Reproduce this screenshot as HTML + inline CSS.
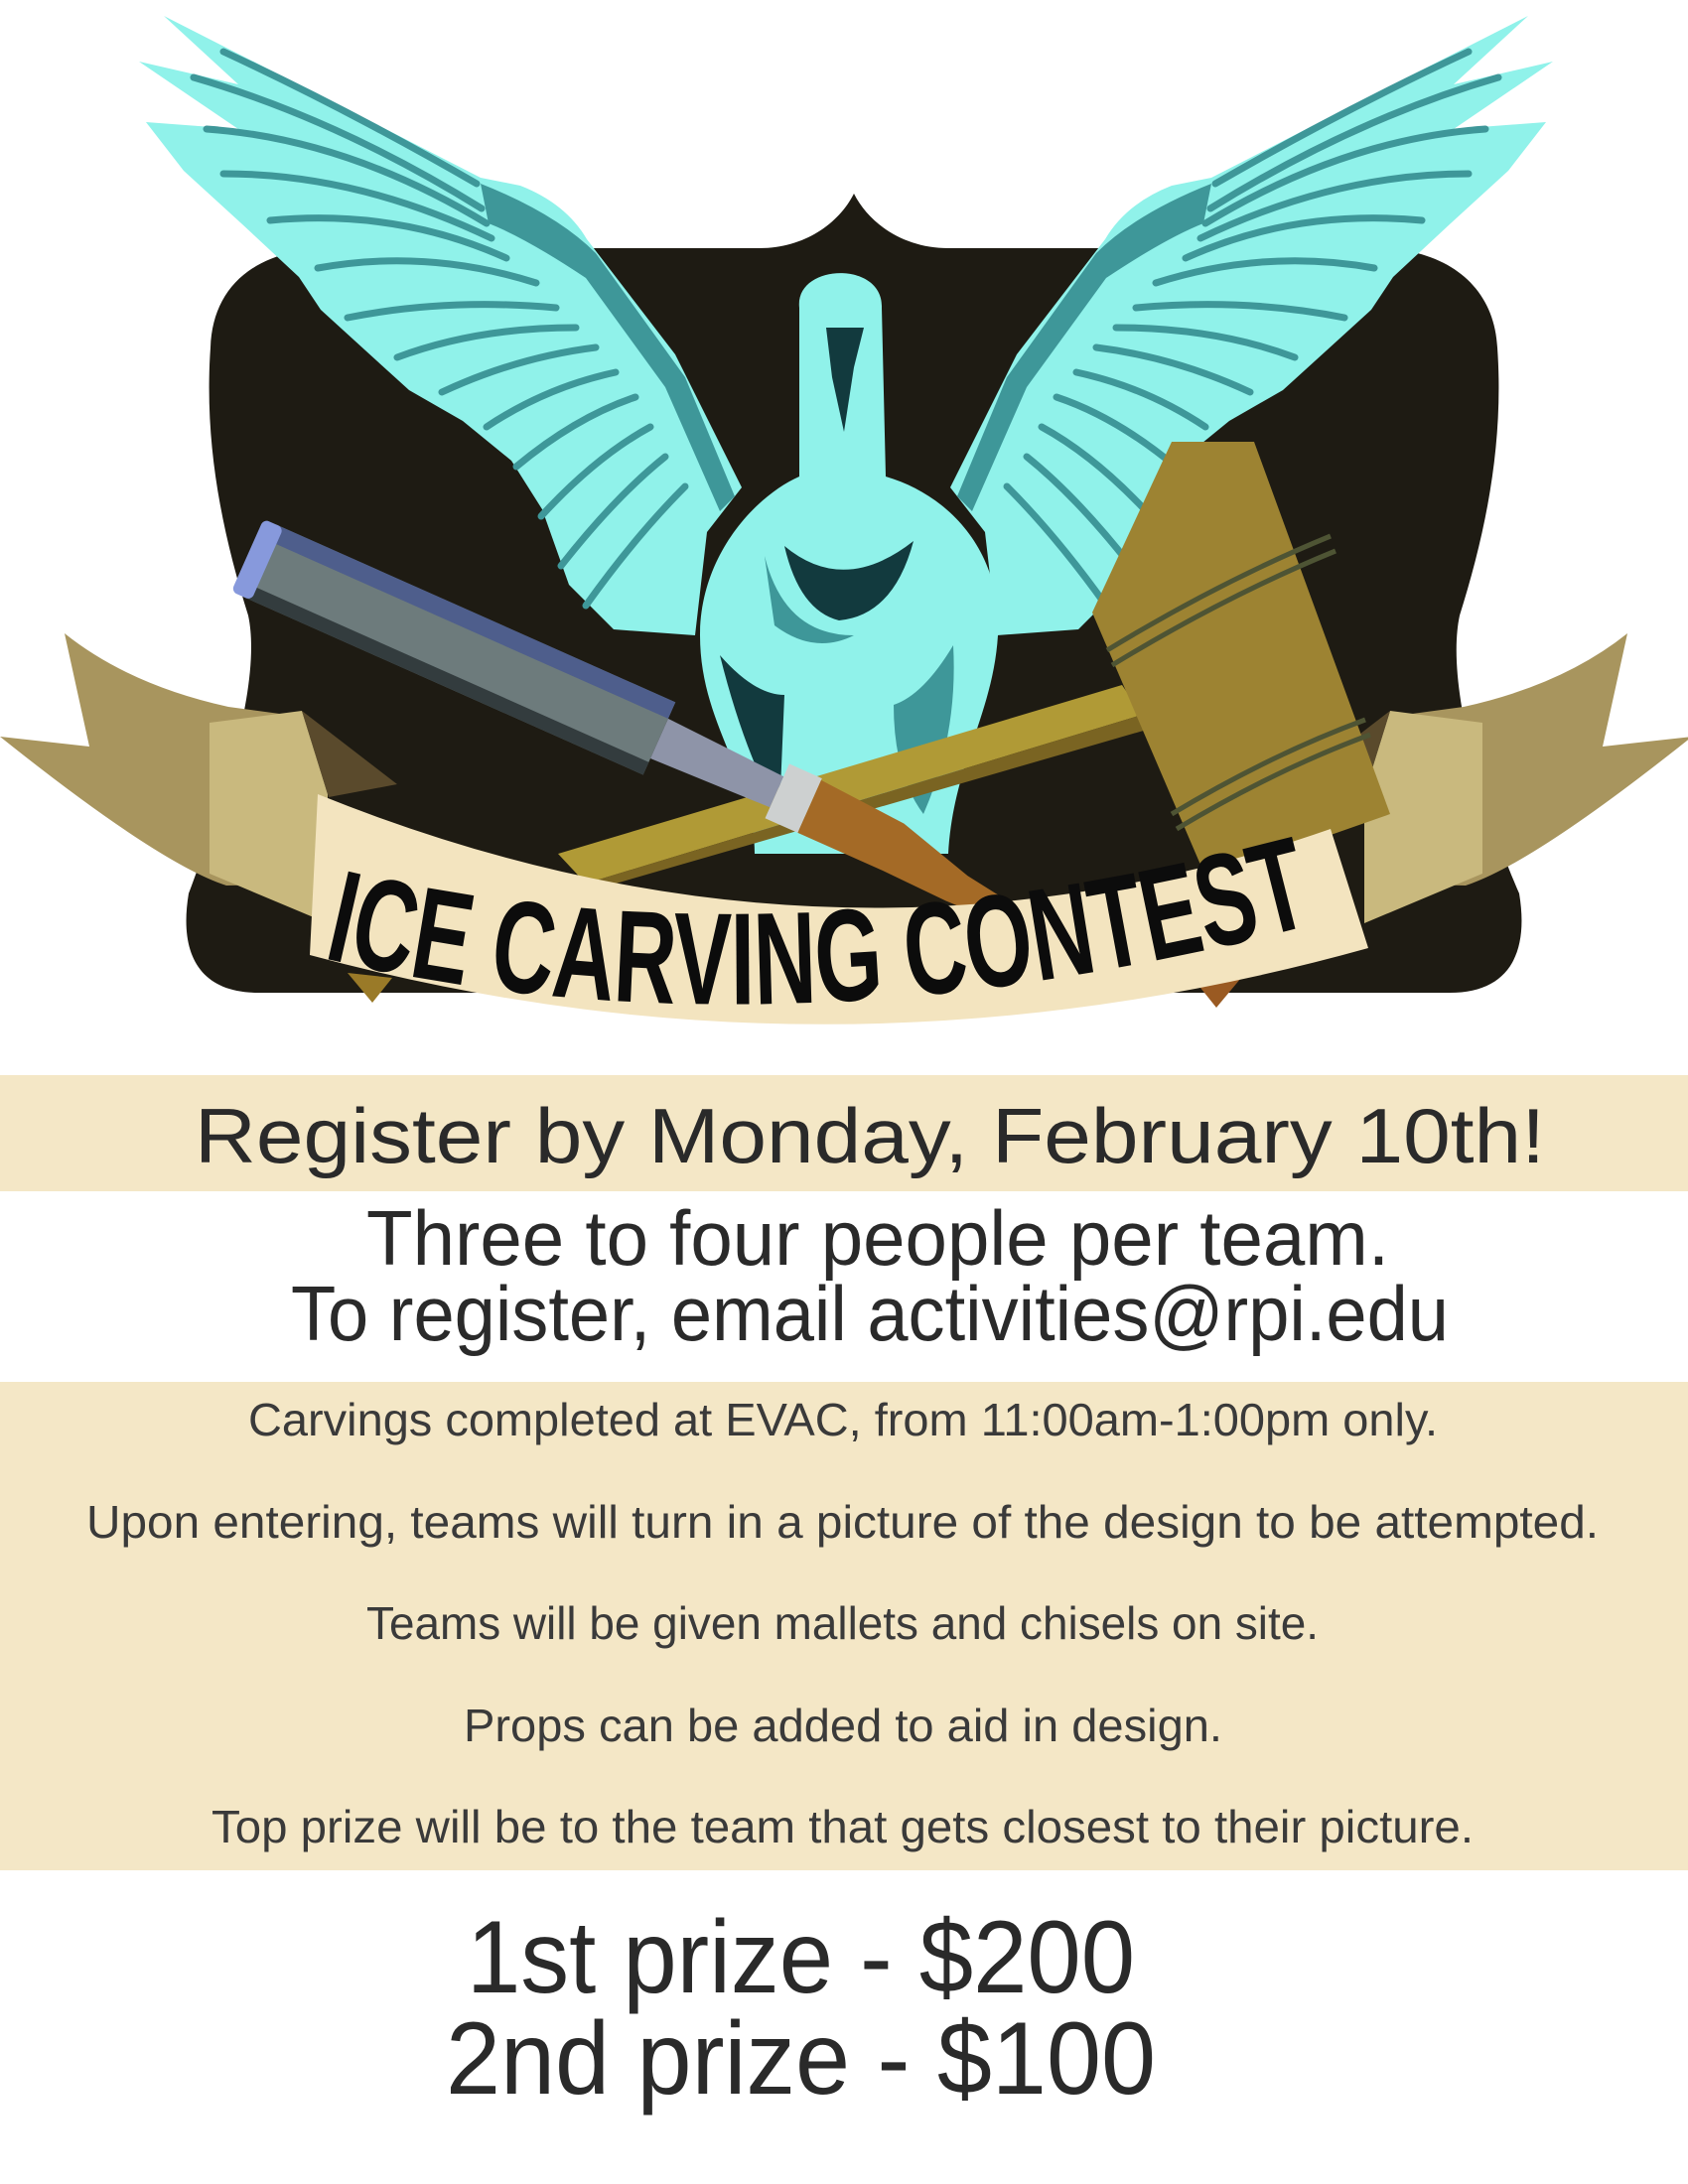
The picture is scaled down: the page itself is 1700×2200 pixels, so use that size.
<!DOCTYPE html>
<html><head><meta charset="utf-8"><style>
html,body{margin:0;padding:0;background:#fff;}
svg{display:block;}
</style></head><body>
<svg width="1700" height="2200" viewBox="0 0 1700 2200" xmlns="http://www.w3.org/2000/svg">
<rect width="1700" height="2200" fill="#fff"/>
<!-- shield -->
<path d="M860,195 C845,225 810,250 765,250 L330,250 C255,252 214,290 212,350 C205,450 225,540 250,620 C265,690 220,820 190,900 C180,960 200,1000 260,1000 L1460,1000 C1520,1000 1540,960 1530,900 C1495,820 1455,690 1470,620 C1495,540 1515,450 1508,350 C1505,290 1460,252 1390,250 L955,250 C910,250 875,225 860,195Z" fill="#1e1b13"/>
<!-- wings -->
<g id="wing">
<path d="M165,16 L330,100 L484,179 L524,187 Q570,205 591,241 L680,357 L747,491 L712,536 L700,640 L618,634 L573,589 L546,513 L515,464 L466,424 L412,393 L368,353 L323,312 L301,279 L243,225 L185,172 L147,123 L240,130 L140,62 L240,85 Z" fill="#90f2ea"/>
<path d="M484,185 Q560,215 600,255 L690,380 L740,500 L725,515 L670,390 L590,280 Q530,240 492,225 Z" fill="#3e9799"/>
<g stroke="#3e9799" stroke-width="7" fill="none" stroke-linecap="round">
<path d="M225,52 Q350,110 480,185"/>
<path d="M195,78 Q340,120 485,210"/>
<path d="M208,130 Q350,140 490,225"/>
<path d="M225,175 Q360,175 495,240"/>
<path d="M272,222 Q400,210 510,260"/>
<path d="M320,270 Q430,250 540,285"/>
<path d="M350,320 Q450,300 560,310"/>
<path d="M400,360 Q480,330 580,330"/>
<path d="M445,395 Q520,360 600,350"/>
<path d="M490,430 Q550,390 620,375"/>
<path d="M520,470 Q580,420 640,400"/>
<path d="M545,520 Q600,460 655,430"/>
<path d="M565,570 Q620,500 670,460"/>
<path d="M590,610 Q640,540 690,490"/>
</g>
</g>
<use href="#wing" transform="translate(1704,0) scale(-1,1)"/>
<!-- body -->
<path d="M805,310 C800,265 890,262 888,310 L892,480 C960,500 1010,560 1005,640 C1000,720 960,770 955,860 L760,860 C760,780 705,730 705,640 C705,560 760,500 805,480 Z" fill="#90f2ea"/>
<path d="M832,330 L870,330 L860,370 L850,435 L838,380 Z" fill="#123a3e"/>
<path d="M790,550 Q850,600 920,545 Q900,620 845,625 Q805,615 790,550Z" fill="#123a3e"/>
<path d="M770,560 Q790,640 860,640 Q820,660 780,630 Z" fill="#3e9799"/>
<path d="M725,660 Q760,700 790,700 L785,820 Q750,760 725,660Z" fill="#123a3e"/>
<path d="M960,650 Q930,700 900,710 Q900,780 930,820 Q965,740 960,650Z" fill="#3e9799"/>
<!-- ribbon tails -->
<g id="tail">
<path d="M65,638 Q130,690 230,712 L304,722 L325,890 L228,892 Q160,870 0,742 L90,752 Z" fill="#a8955e"/>
<path d="M211,728 L304,716 L330,800 L330,930 L211,880 Z" fill="#c9b97e"/>
<path d="M304,716 L400,790 L331,803 Z" fill="#5a4a2c"/>
</g>
<use href="#tail" transform="translate(1704,0) scale(-1,1)"/>
<!-- feet -->
<path d="M350,980 L395,985 L375,1010 Z" fill="#9a7a28"/>
<path d="M1205,990 L1250,985 L1225,1015 Z" fill="#9a5a22"/>
<!-- mallet handle -->
<path d="M562,860 L1130,690 L1150,720 L590,890 Z" fill="#b09a36"/>
<path d="M590,890 L1150,720 L1155,735 L620,890 Z" fill="#7a6422"/>
<!-- chisel -->
<g transform="translate(262,565) rotate(24)">
<rect x="0" y="-40" width="440" height="80" fill="#6d7b7c"/>
<rect x="0" y="-40" width="440" height="18" fill="#4e5e8c"/>
<rect x="0" y="26" width="440" height="14" fill="#333c3e"/>
<rect x="-14" y="-40" width="22" height="80" rx="6" fill="#8799dc"/>
<polygon points="440,-22 570,-16 570,18 440,22" fill="#8e94a8"/>
<rect x="570" y="-30" width="36" height="60" fill="#cdd0d0"/>
<polygon points="606,-28 700,-22 780,0 850,10 860,30 770,32 700,30 606,30" fill="#a46a26"/>
</g>
<!-- mallet head -->
<path d="M1180,445 L1263,445 L1400,820 L1215,885 L1100,617 Z" fill="#9d8332"/>
<g stroke="#4e5434" stroke-width="5" fill="none">
<path d="M1115,655 Q1230,585 1340,540"/>
<path d="M1120,670 Q1235,600 1345,555"/>
<path d="M1180,820 Q1280,760 1375,725"/>
<path d="M1185,835 Q1285,775 1380,740"/>
</g>
<!-- front ribbon -->
<path d="M320,800 Q840,1010 1340,835 L1378,955 Q840,1105 312,962 Z" fill="#f3e4bf"/>
<path id="tp" d="M325,965 Q790,1075 1345,925" fill="none"/>
<text font-family="Liberation Sans, sans-serif" font-weight="bold" font-size="132" fill="#0c0c0c"><textPath href="#tp" textLength="1010" lengthAdjust="spacingAndGlyphs">ICE CARVING CONTEST</textPath></text>
<!-- bands -->
<rect x="0" y="1083" width="1700" height="117" fill="#f4e7c6"/>
<rect x="0" y="1392" width="1700" height="492" fill="#f4e7c6"/>
<g font-family="Liberation Sans, sans-serif" fill="#2a2a2a" font-weight="normal">
<text x="196" y="1171" font-size="78" textLength="1360" lengthAdjust="spacingAndGlyphs">Register by Monday, February 10th!</text>
<text x="369" y="1274" font-size="78" textLength="1030" lengthAdjust="spacingAndGlyphs">Three to four people per team.</text>
<text x="293" y="1350" font-size="78" textLength="1166" lengthAdjust="spacingAndGlyphs">To register, email activities@rpi.edu</text>
<g font-size="46" fill="#3a3a3a">
<text x="250" y="1446" textLength="1198" lengthAdjust="spacingAndGlyphs">Carvings completed at EVAC, from 11:00am-1:00pm only.</text>
<text x="87" y="1549" textLength="1523" lengthAdjust="spacingAndGlyphs">Upon entering, teams will turn in a picture of the design to be attempted.</text>
<text x="369" y="1651" textLength="959" lengthAdjust="spacingAndGlyphs">Teams will be given mallets and chisels on site.</text>
<text x="467" y="1754" textLength="764" lengthAdjust="spacingAndGlyphs">Props can be added to aid in design.</text>
<text x="213" y="1856" textLength="1271" lengthAdjust="spacingAndGlyphs">Top prize will be to the team that gets closest to their picture.</text>
</g>
<text x="470" y="2007" font-size="104" textLength="673" lengthAdjust="spacingAndGlyphs">1st prize - $200</text>
<text x="449" y="2109" font-size="104" textLength="715" lengthAdjust="spacingAndGlyphs">2nd prize - $100</text>
</g>
</svg>
</body></html>
